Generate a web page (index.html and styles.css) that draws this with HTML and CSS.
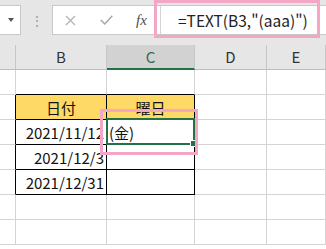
FILE: index.html
```html
<!DOCTYPE html>
<html lang="ja">
<head>
    <meta charset="UTF-8">
    <meta name="viewport" content="width=device-width, initial-scale=1.0">
    <title>TEXT関数 曜日</title>
    <link rel="stylesheet" href="styles.css">
</head>
<body>
    <div class="toolbar">
        <div class="namebox"><span class="arrow"></span></div>
        <div class="dots">⋮</div>
        <div class="formula">
            <div class="buttons">
                <svg class="cancel" width="11" height="11" viewBox="0 0 11 11">
                    <path d="M1 1 L10 10 M10 1 L1 10" stroke="#b4b4b4" stroke-width="1.3" fill="none"/>
                </svg>
                <svg class="enter" width="13" height="10" viewBox="0 0 13 10">
                    <path d="M0.8 5 L4.8 9 L12.3 0.8" stroke="#a8a8a8" stroke-width="1.5" fill="none"/>
                </svg>
                <span class="fx">fx</span>
            </div>
            <div class="formula-text">=TEXT(B3,"(aaa)")</div>
        </div>
    </div>

    <div class="sheet">
        <!-- column headers -->
        <div class="hdr"></div>
        <div class="hdr">B</div>
        <div class="hdr sel">C</div>
        <div class="hdr">D</div>
        <div class="hdr">E</div>

        <!-- row 2 -->
        <div class="cell"></div>
        <div class="cell top"></div>
        <div class="cell top"></div>
        <div class="cell"></div>
        <div class="cell"></div>

        <!-- row 3 -->
        <div class="cell left"></div>
        <div class="cell t head">日付</div>
        <div class="cell t head">曜日</div>
        <div class="cell"></div>
        <div class="cell"></div>

        <!-- row 4 -->
        <div class="cell left"></div>
        <div class="cell t num">2021/11/12</div>
        <div class="cell t text active">(金)</div>
        <div class="cell"></div>
        <div class="cell"></div>

        <!-- row 5 -->
        <div class="cell left"></div>
        <div class="cell t num">2021/12/3</div>
        <div class="cell t"></div>
        <div class="cell"></div>
        <div class="cell"></div>

        <!-- row 6 -->
        <div class="cell left"></div>
        <div class="cell t num">2021/12/31</div>
        <div class="cell t"></div>
        <div class="cell"></div>
        <div class="cell"></div>

        <!-- row 7 -->
        <div class="cell"></div>
        <div class="cell"></div>
        <div class="cell"></div>
        <div class="cell"></div>
        <div class="cell"></div>

        <!-- row 8 -->
        <div class="cell"></div>
        <div class="cell"></div>
        <div class="cell"></div>
        <div class="cell"></div>
        <div class="cell"></div>
    </div>

    <!-- annotation marks -->
    <div class="mark mark-formula"></div>
    <div class="mark mark-cell"></div>
</body>
</html>
```

FILE: styles.css
```css
body {
    margin: 0;
    width: 326px;
    height: 249px;
    overflow: hidden;
    background: #ffffff;
    font-family: "Noto Sans CJK JP", "Noto Sans", sans-serif;
    position: relative;
}
.toolbar {
    height: 45px;
    background: #e6e6e6;
    display: flex;
    align-items: flex-start;
    padding-top: 5px;
    box-sizing: border-box;
}
.namebox {
    width: 21px;
    height: 30px;
    background: #fff;
    border: 1px solid #c8c8c8;
    border-left: none;
    box-sizing: border-box;
    display: flex;
    align-items: center;
    justify-content: flex-end;
    padding-right: 6px;
}
.arrow {
    width: 0;
    height: 0;
    border-left: 3px solid transparent;
    border-right: 3px solid transparent;
    border-top: 4px solid #555;
}
.dots {
    width: 31px;
    height: 30px;
    line-height: 30px;
    text-align: center;
    color: #a0a0a0;
    font-size: 14px;
}
.formula {
    flex: 1;
    height: 30px;
    background: #fff;
    border: 1px solid #c8c8c8;
    border-right: none;
    box-sizing: border-box;
    display: flex;
    align-items: center;
}
.buttons {
    width: 108px;
    height: 100%;
    display: flex;
    align-items: center;
    border-right: 1px solid #d4d4d4;
    box-sizing: border-box;
}
.cancel {
    margin-left: 12px;
}
.enter {
    margin-left: 24px;
}
.fx {
    margin-left: 23px;
    font-family: "Liberation Serif", serif;
    font-style: italic;
    font-size: 15px;
    color: #505050;
}
.formula-text {
    padding-left: 17px;
    font-size: 15.5px;
    color: #222;
    white-space: nowrap;
}
.sheet {
    display: grid;
    grid-template-columns: 16px 91px 88px 72px 1fr;
    grid-auto-rows: 25px;
}
.hdr {
    background: #e6e6e6;
    border-right: 1px solid #c6c6c6;
    border-bottom: 1px solid #bdbdbd;
    box-sizing: border-box;
    text-align: center;
    font-size: 15px;
    line-height: 24px;
    color: #333;
}
.hdr.sel {
    background: #d2d2d2;
    border-bottom: 2px solid #217346;
    color: #2f6b4c;
}
.cell {
    border-right: 1px solid #d4d4d4;
    border-bottom: 1px solid #d4d4d4;
    box-sizing: border-box;
    font-size: 15px;
    color: #111;
    display: flex;
    align-items: center;
    padding: 0 2px;
    white-space: nowrap;
    overflow: hidden;
}
.cell.left {
    border-right-color: #000;
}
.cell.top {
    border-bottom-color: #000;
}
.cell.t {
    border-right-color: #000;
    border-bottom-color: #000;
}
.head {
    background: #ffd966;
    justify-content: center;
}
.num {
    justify-content: flex-end;
}
.text {
    justify-content: flex-start;
}
.active {
    position: relative;
    overflow: visible;
}
.active::after {
    content: "";
    position: absolute;
    left: -1px;
    top: -2px;
    right: -1px;
    bottom: -1px;
    border: 2px solid #217346;
}
.active::before {
    content: "";
    position: absolute;
    right: -3px;
    bottom: -3px;
    width: 5px;
    height: 5px;
    background: #217346;
    border: 1px solid #fff;
    z-index: 1;
}
.mark {
    position: absolute;
    border: 3px solid #f4a7c4;
    box-sizing: border-box;
    z-index: 2;
}
.mark-formula {
    left: 154px;
    top: 0;
    width: 166px;
    height: 38px;
}
.mark-cell {
    left: 100px;
    top: 109px;
    width: 98px;
    height: 46px;
}
```
